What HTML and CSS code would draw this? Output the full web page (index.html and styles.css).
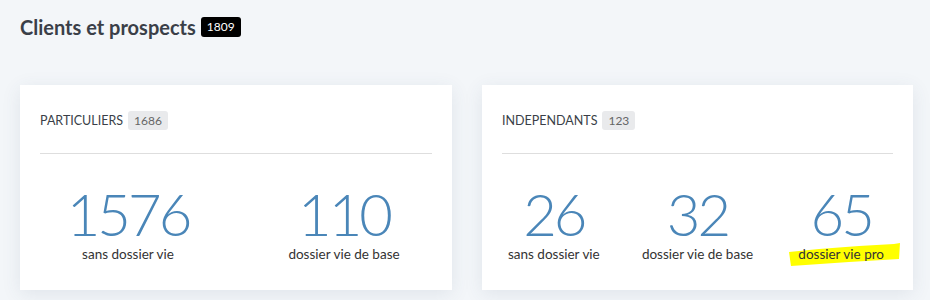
FILE: index.html
```html
<html>
<head>
<link rel="stylesheet" href="styles.css">
</head>
<body>

<div class="page">
	<h1 class="title">Clients et prospects <span class="total">1809</span></h1>

	<div class="cards">
		<div class="card">
			<div class="cardhead">PARTICULIERS <span class="count">1686</span></div>
			<div class="stats">
				<div class="stat">
					<div class="num">1576</div>
					<div class="lbl">sans dossier vie</div>
				</div>
				<div class="stat">
					<div class="num">110</div>
					<div class="lbl">dossier vie de base</div>
				</div>
			</div>
		</div>

		<div class="card">
			<div class="cardhead">INDEPENDANTS <span class="count">123</span></div>
			<div class="stats">
				<div class="stat">
					<div class="num">26</div>
					<div class="lbl">sans dossier vie</div>
				</div>
				<div class="stat">
					<div class="num">32</div>
					<div class="lbl">dossier vie de base</div>
				</div>
				<div class="stat">
					<div class="num">65</div>
					<div class="lbl">
						<span class="marked">
							<svg class="marker" width="114" height="26" viewBox="0 0 114 26"><polygon points="0,9 30,6 70,3 105,1 111,0 110,16 60,19 2,23" fill="#ffff00"/></svg>
							<span class="mtext">dossier vie pro</span>
						</span>
					</div>
				</div>
			</div>
		</div>
	</div>
</div>

</body>
</html>
```

FILE: styles.css
```css
body {
	margin: 0;
	background-color: #f3f6f9;
	font-family: Lato, "Open Sans", sans-serif;
	color: #333;
}
.page {
	padding: 16px 17px 0 20px;
}
.title {
	margin: 0;
	font-size: 20px;
	font-weight: bold;
	color: #3a3f48;
	line-height: 22px;
	display: flex;
	align-items: center;
	gap: 5px;
}
.total {
	background-color: #000;
	color: #fff;
	font-size: 12px;
	font-weight: normal;
	border-radius: 3px;
	padding: 0 6px;
	line-height: 20px;
}
.cards {
	display: grid;
	grid-template-columns: 432px 431px;
	gap: 30px;
	margin-top: 47px;
}
.card {
	background-color: #fff;
	height: 205px;
	box-shadow: 0 4px 18px rgba(60, 80, 110, 0.1);
}
.cardhead {
	margin: 0 20px;
	padding: 26px 0 23px 0;
	border-bottom: 1px solid #dedede;
	font-size: 12.5px;
	color: #3a3f48;
	display: flex;
	align-items: center;
	gap: 5px;
	line-height: 19px;
}
.count {
	background-color: #e9eaec;
	color: #666;
	font-size: 12px;
	border-radius: 3px;
	padding: 0 6px;
	line-height: 19px;
}
.stats {
	display: flex;
	padding-top: 35px;
}
.stat {
	flex: 1;
	text-align: center;
}
.num {
	font-size: 58px;
	font-weight: 300;
	letter-spacing: -3px;
	color: #4a86b8;
	line-height: 50px;
}
.lbl {
	font-size: 13.5px;
	color: #333;
	line-height: 20px;
	margin-top: 5px;
}
.marked {
	position: relative;
	display: inline-block;
}
.mtext {
	position: relative;
}
.marker {
	position: absolute;
	left: -9px;
	top: -1px;
}
```
